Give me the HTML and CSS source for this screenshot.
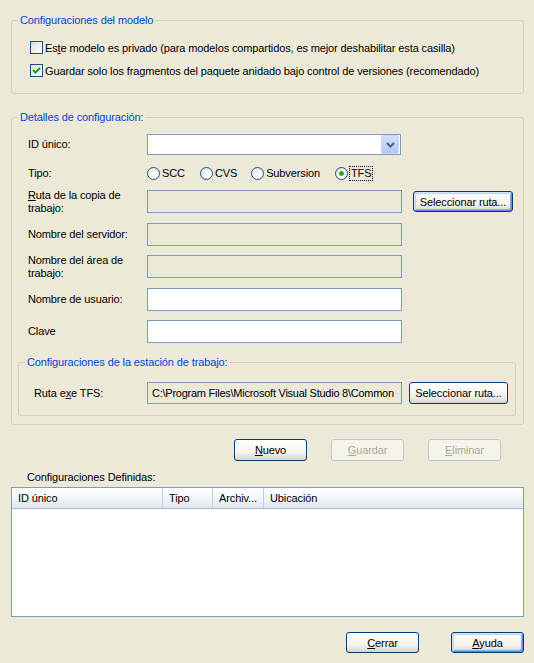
FILE: index.html
```html
<!DOCTYPE html>
<html lang="es">
<head>
<meta charset="utf-8">
<title>Configuraciones</title>
<link rel="stylesheet" href="styles.css">
</head>
<body>
<div class="dialog">
  <fieldset class="group g1">
    <legend>Configuraciones del modelo</legend>
    <div class="check-row"><span class="cb"></span><span>Es<u>t</u>e modelo es privado (para modelos compartidos, es mejor deshabilitar esta casilla)</span></div>
    <div class="check-row"><span class="cb"><svg width="11" height="11" viewBox="0 0 11 11"><polyline points="2,5 4.5,7.5 9,3" fill="none" stroke="#21A121" stroke-width="2"/></svg></span><span>Guardar solo los fragmentos del paquete anidado bajo control de versiones (recomendado)</span></div>
  </fieldset>

  <fieldset class="group g2">
    <legend>Detalles de configuración:</legend>
    <div class="form">
      <div class="row r-id">
        <div class="label">ID único:</div>
        <div class="combo"><span class="combo-btn"><svg width="9" height="6" viewBox="0 0 9 6"><polyline points="1,1 4.5,4.5 8,1" fill="none" stroke="#4D6185" stroke-width="2"/></svg></span></div>
      </div>
      <div class="row r-tipo">
        <div class="label">Tipo:</div>
        <div class="radios">
          <span class="radio-item"><span class="rb"></span>SCC</span>
          <span class="radio-item"><span class="rb"></span>CVS</span>
          <span class="radio-item"><span class="rb"></span>Subversion</span>
          <span class="radio-item"><span class="rb on"><span class="dot"></span></span><span class="focus">TFS</span></span>
        </div>
      </div>
      <div class="row r-ruta">
        <div class="label two"><u>R</u>uta de la copia de<br>trabajo:</div>
        <div class="input disabled"></div>
        <button class="btn default sel1">Seleccionar ruta...</button>
      </div>
      <div class="row r-serv">
        <div class="label">Nombre del servidor:</div>
        <div class="input disabled"></div>
      </div>
      <div class="row r-area">
        <div class="label two">Nombre del área de<br>trabajo:</div>
        <div class="input disabled"></div>
      </div>
      <div class="row r-user">
        <div class="label">Nombre de usuario:</div>
        <div class="input"></div>
      </div>
      <div class="row r-clave">
        <div class="label">Clave</div>
        <div class="input"></div>
      </div>
    </div>
    <fieldset class="group g3">
      <legend>Configuraciones de la estación de trabajo:</legend>
      <div class="row r-exe">
        <div class="label">Ruta e<u>x</u>e TFS:</div>
        <div class="input disabled path">C:\Program Files\Microsoft Visual Studio 8\Common</div>
        <button class="btn sel2">Seleccionar ruta...</button>
      </div>
    </fieldset>
  </fieldset>

  <div class="actions">
    <button class="btn act"><u>N</u>uevo</button>
    <button class="btn act" disabled><u>G</u>uardar</button>
    <button class="btn act" disabled><u>E</u>liminar</button>
  </div>

  <div class="list-label">Configuraciones Definidas:</div>
  <div class="listview">
    <div class="lv-head">
      <div class="col c1">ID único</div>
      <div class="col c2">Tipo</div>
      <div class="col c3">Archiv...</div>
      <div class="col c4">Ubicación</div>
    </div>
  </div>

  <div class="footer">
    <button class="btn foot"><u>C</u>errar</button>
    <button class="btn foot default"><u>A</u>yuda</button>
  </div>
</div>
</body>
</html>
```
FILE: styles.css
```css
html, body {
  margin: 0;
  padding: 0;
  background: #ECE9D8;
}
body {
  width: 534px;
  height: 663px;
  overflow: hidden;
  font-family: "Liberation Sans", Arial, sans-serif;
  font-size: 11px;
  letter-spacing: -0.12px;
  color: #000;
}
.dialog {
  padding: 14px 10px 0 11px;
}
u { text-decoration: underline; text-underline-offset: 1px; }

.group {
  margin: 0;
  padding: 0;
  border: 1px solid #D0D0BF;
  border-radius: 3px;
  min-width: 0;
}
.group > legend {
  margin-left: 6px;
  padding: 0 2px;
  line-height: 13px;
  color: #0046D5;
}

.g1 {
  padding: 9px 0 11px 0;
}
.check-row {
  display: flex;
  align-items: center;
  height: 23px;
  gap: 2px;
  padding-left: 18px;
}
.cb {
  width: 11px;
  height: 11px;
  border: 1px solid #1C5180;
  background: linear-gradient(135deg, #DCDCD7, #FFFFFF);
  display: flex;
  align-items: center;
  justify-content: center;
  flex: none;
}

.g2 {
  margin-top: 17px;
  padding: 10px 0 8px 0;
}
.form {
  padding-left: 16px;
}
.row {
  display: flex;
  align-items: center;
}
.label {
  width: 119px;
  flex: none;
  line-height: 13px;
}
.r-id { height: 21px; }
.r-tipo { height: 14px; margin-top: 11px; }
.r-ruta { height: 23px; margin-top: 10px; }
.r-serv { height: 23px; margin-top: 10px; }
.r-area { height: 23px; margin-top: 9px; }
.r-user { height: 23px; margin-top: 10px; }
.r-clave { height: 23px; margin-top: 9px; }

.combo {
  box-sizing: border-box;
  width: 254px;
  height: 21px;
  border: 1px solid #7F9DB9;
  background: #fff;
  display: flex;
  justify-content: flex-end;
  align-items: center;
  padding-right: 1px;
}
.combo-btn {
  width: 16px;
  height: 17px;
  border-radius: 2px;
  background: linear-gradient(#D2DEFC, #B4C8F6);
  border: 1px solid #C3D3FD;
  display: flex;
  align-items: center;
  justify-content: center;
}

.radios {
  display: flex;
  align-items: center;
}
.radio-item {
  display: flex;
  align-items: center;
  gap: 2px;
  margin-right: 15px;
}
.radio-item:nth-child(2) { margin-right: 14px; }
.rb {
  box-sizing: border-box;
  width: 13px;
  height: 13px;
  border-radius: 50%;
  border: 1px solid #1C5180;
  background: radial-gradient(circle at 65% 65%, #FFFFFF 20%, #DCDCD7 100%);
  display: flex;
  align-items: center;
  justify-content: center;
}
.dot {
  width: 5px;
  height: 5px;
  border-radius: 50%;
  background: radial-gradient(circle, #21A121 40%, #7BD37A 100%);
}
.focus {
  outline: 1px dotted #000;
  outline-offset: 0;
  padding: 0 1px;
  line-height: 13px;
}

.input {
  box-sizing: border-box;
  width: 255px;
  height: 23px;
  border: 1px solid #7F9DB9;
  background: #fff;
  flex: none;
}
.input.disabled {
  background: #ECE9D8;
}
.path {
  height: 22px;
  padding-left: 4px;
  line-height: 20px;
  letter-spacing: -0.25px;
  white-space: nowrap;
  overflow: hidden;
}

.btn {
  box-sizing: border-box;
  font: inherit;
  letter-spacing: inherit;
  color: #000;
  border: 1px solid #003C74;
  border-radius: 3px;
  background: linear-gradient(#FFFFFF 0%, #F4F3EE 60%, #E2DFD6 90%, #D6D0C5 100%);
  padding: 0;
  height: 22px;
  flex: none;
}
.btn.default {
  box-shadow: inset 1px 1px 0 #CEE7FF, inset -1px -1px 0 #6982EE, inset 2px 2px 0 #BCD4F6, inset -2px -2px 0 #89ADE4;
}
.btn:disabled {
  border-color: #C9C7BA;
  background: #F5F4EA;
  color: #ACA899;
}
.sel1 {
  width: 100px;
  height: 21px;
  margin-left: 11px;
}
.sel2 {
  width: 99px;
  margin-left: 7px;
}

.g3 {
  margin: 13px 7px 0 6px;
  padding: 13px 0 11px 0;
}
.r-exe {
  padding-left: 15px;
}
.r-exe .label {
  width: 113px;
}

.actions {
  display: flex;
  margin-top: 14px;
  padding-left: 223px;
  gap: 24px;
}
.act { width: 73px; }

.list-label {
  margin-top: 10px;
  padding-left: 16px;
  line-height: 13px;
}
.listview {
  margin-top: 3px;
  height: 130px;
  box-sizing: border-box;
  border: 1px solid #7F9DB9;
  background: #fff;
}
.lv-head {
  display: flex;
  height: 21px;
  box-sizing: border-box;
  border-bottom: 1px solid #A5B9D3;
  background: linear-gradient(#FFFFFF, #F3F4F8 50%, #E1E5EE);
}
.col {
  box-sizing: border-box;
  padding-left: 6px;
  line-height: 20px;
  border-right: 1px solid #C7CCD9;
  white-space: nowrap;
}
.c1 { width: 151px; }
.c2 { width: 50px; }
.c3 { width: 51px; }
.c4 { flex: 1; border-right: none; }

.footer {
  display: flex;
  justify-content: flex-end;
  gap: 32px;
  margin-top: 15px;
}
.foot { width: 73px; height: 21px; }
```
